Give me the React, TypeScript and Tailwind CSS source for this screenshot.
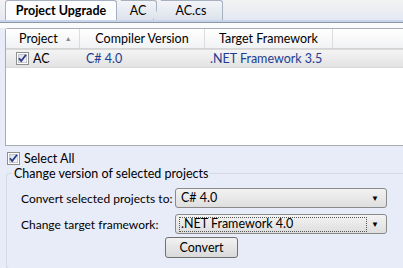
import React from 'react';

const font = { fontFamily: 'Lato, "Noto Sans", sans-serif' };

const CheckBox: React.FC = () => (
  <svg width="13" height="13" viewBox="0 0 13 13" className="shrink-0">
    <defs>
      <linearGradient id="cb" x1="0" y1="0" x2="1" y2="1">
        <stop offset="0" stopColor="#d9dce2" />
        <stop offset="1" stopColor="#fbfbfb" />
      </linearGradient>
    </defs>
    <rect x="0.5" y="0.5" width="12" height="12" fill="#fff" stroke="#8e8f8f" />
    <rect x="2.5" y="2.5" width="8" height="8" fill="url(#cb)" stroke="#c4c7cc" />
    <path d="M3 6.2 L5.2 9 L10 2.8" fill="none" stroke="#2a3a8c" strokeWidth="1.8" />
  </svg>
);

const Combo: React.FC<{ value: string; focused?: boolean }> = ({ value, focused }) => (
  <div className="flex items-center h-[20px] w-[212px] rounded-[3px] border border-[#8a8a8a] bg-gradient-to-b from-[#f3f3f3] to-[#dedede] px-[3px]">
    <div className={`flex-1 h-[15px] flex items-center px-[1px] ${focused ? 'border border-dotted border-[#555]' : 'border border-transparent'}`}>
      <span className="text-[12.5px] text-black leading-none">{value}</span>
    </div>
    <span className="w-[16px] text-center text-[8px] text-black">▼</span>
  </div>
);

const Tab: React.FC<{ label: string; active?: boolean; w: string }> = ({ label, active, w }) => (
  <div
    className={`relative h-[20px] ${w} flex items-center justify-center border border-b-0 border-[#a7b0bf] rounded-t-[3px] -ml-[4px] ${
      active ? 'bg-[#fbfcfe] font-bold z-10' : 'bg-gradient-to-b from-[#f2f4f8] to-[#dde3ec] pl-[6px]'
    }`}
    style={{ clipPath: active ? undefined : 'polygon(8px 0, 100% 0, 100% 100%, 0 100%)' }}
  >
    <span className="text-[12.5px] text-black whitespace-nowrap">{label}</span>
  </div>
);

export default function App() {
  return (
    <div className="w-[403px] h-[268px] overflow-hidden bg-[#e8ebf8] text-[12.5px] leading-[15px] text-black whitespace-nowrap" style={font}>
      {/* tabs */}
      <div className="h-[22px] bg-gradient-to-b from-[#f3f3f3] to-[#e4e9f3] flex items-end pl-[9px] border-b-[2px] border-[#c7d4ee]">
        <Tab label="Project Upgrade" active w="w-[112px]" />
        <Tab label="AC" w="w-[44px]" />
        <Tab label="AC.cs" w="w-[70px]" />
      </div>
      <div className="h-[6px] bg-[#fafbfc] border-t border-[#8e96a3]" />

      {/* list */}
      <div className="ml-[5px] h-[118px] bg-white border border-r-0 border-[#a9acb3] rounded-tl-[3px]">
        <div className="flex h-[20px] bg-gradient-to-b from-white to-[#f1f2f4] border-b border-[#d5d5d5]">
          <div className="w-[74px] flex items-center pl-[13px] gap-[7px] border-r border-[#dcdcdc]">
            <span>Project</span>
            <span className="text-[7px] text-[#8a8a8a]">▲</span>
          </div>
          <div className="w-[125px] flex items-center justify-center border-r border-[#dcdcdc]">Compiler Version</div>
          <div className="w-[128px] flex items-center justify-center border-r border-[#dcdcdc]">Target Framework</div>
        </div>
        <div className="flex h-[19px] bg-gradient-to-b from-[#f4f4f4] to-[#e3e3e3] border-y border-[#d9d9d9]">
          <div className="w-[74px] flex items-center pl-[10px] gap-[4px]">
            <CheckBox />
            <span>AC</span>
          </div>
          <div className="w-[125px] flex items-center pl-[6px] text-[#1c3d94]">C# 4.0</div>
          <div className="w-[128px] flex items-center pl-[5px] text-[#1c3d94]">.NET Framework 3.5</div>
        </div>
      </div>

      {/* select all */}
      <div className="flex items-center gap-[4px] pl-[7px] h-[20px] mt-[2px]">
        <CheckBox />
        <span>Select All</span>
      </div>

      {/* group */}
      <div className="relative ml-[6px] mt-[5px] h-[96px] border border-r-0 border-[#d5dae6] rounded-l-[3px]">
        <span className="absolute -top-[8px] left-[5px] px-[2px] bg-[#e8ebf8]">Change version of selected projects</span>
        <div className="flex flex-col pl-[14px] pt-[14px] gap-[6px] text-[12px]">
          <div className="flex items-center">
            <span className="w-[154px]">Convert selected projects to:</span>
            <Combo value="C# 4.0" />
          </div>
          <div className="flex items-center">
            <span className="w-[154px]">Change target framework:</span>
            <Combo value=".NET Framework 4.0" focused />
          </div>
          <div className="pl-[144px] -mt-[3px]">
            <button className="w-[73px] h-[21px] rounded-[3px] border border-[#707070] bg-gradient-to-b from-[#f2f2f2] to-[#d9d9d9] text-[12.5px]">
              Convert
            </button>
          </div>
        </div>
      </div>
    </div>
  );
}
